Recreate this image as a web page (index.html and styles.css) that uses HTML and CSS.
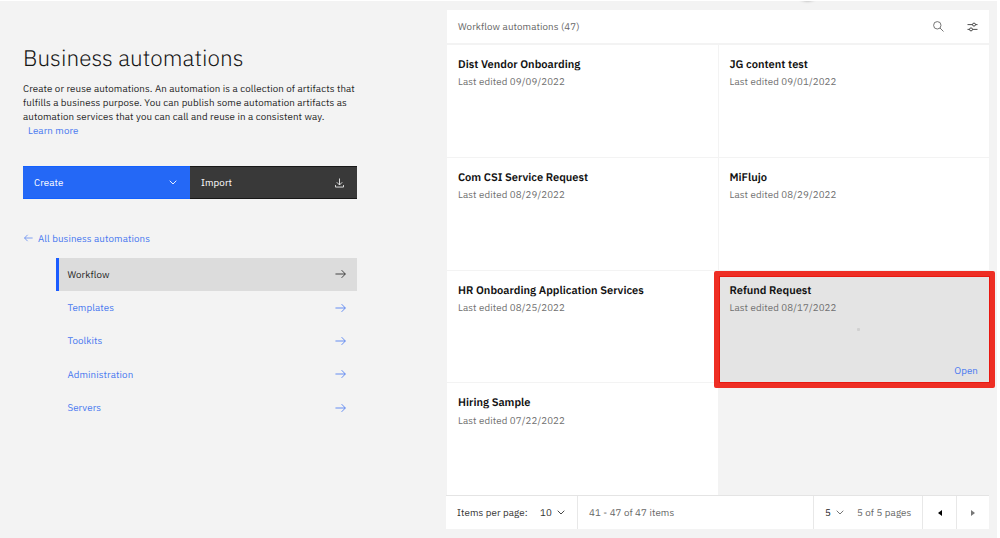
FILE: index.html
```html
<!DOCTYPE html>
<html lang="en">
<head>
<meta charset="utf-8">
<title>Business automations</title>
<link rel="stylesheet" href="styles.css">
</head>
<body>
<svg class="defs" aria-hidden="true">
  <symbol id="arrow" viewBox="0 0 12 10"><path d="M.5 5h10.8M7.2.8 11.3 5 7.2 9.2"/></symbol>
  <symbol id="chevron" viewBox="0 0 8 5"><path d="M.7.7 4 4 7.3.7"/></symbol>
</svg>
<div class="page">
  <div class="knob"></div>
  <aside class="side">
    <h1 class="title">Business automations</h1>
    <p class="desc">Create or reuse automations. An automation is a collection of artifacts that<br>fulfills a business purpose. You can publish some automation artifacts as<br>automation services that you can call and reuse in a consistent way.<br><a class="learn">Learn more</a></p>
    <div class="actions">
      <div class="btn create"><span>Create</span><svg class="chev"><use href="#chevron"/></svg></div>
      <div class="btn import"><span>Import</span><svg class="download" viewBox="0 0 10 10"><path d="M5 0v7M2 4.2l3 3 3-3M.5 7.2v2.3h9V7.2"/></svg></div>
    </div>
    <a class="back"><svg class="back-arrow"><use href="#arrow"/></svg><span>All business automations</span></a>
    <nav class="nav">
      <a class="item active"><span>Workflow</span><svg class="arrow"><use href="#arrow"/></svg></a>
      <a class="item"><span>Templates</span><svg class="arrow"><use href="#arrow"/></svg></a>
      <a class="item"><span>Toolkits</span><svg class="arrow"><use href="#arrow"/></svg></a>
      <a class="item"><span>Administration</span><svg class="arrow"><use href="#arrow"/></svg></a>
      <a class="item"><span>Servers</span><svg class="arrow"><use href="#arrow"/></svg></a>
    </nav>
  </aside>
  <main class="main">
    <header class="head">
      <span class="head-title">Workflow automations (47)</span>
      <svg class="search" viewBox="0 0 11 11"><circle cx="4.3" cy="4.3" r="3.7"/><path d="M7 7l3.5 3.5"/></svg>
      <svg class="filter" viewBox="0 0 11 10"><path d="M.5 2.6h5M8.5 2.6h2M.5 7.4h2M5.5 7.4h5"/><circle cx="7" cy="2.6" r="1.5"/><circle cx="4" cy="7.4" r="1.5"/></svg>
    </header>
    <section class="cards">
      <article class="card"><h2>Dist Vendor Onboarding</h2><p>Last edited 09/09/2022</p></article>
      <article class="card"><h2>JG content test</h2><p>Last edited 09/01/2022</p></article>
      <article class="card"><h2>Com CSI Service Request</h2><p>Last edited 08/29/2022</p></article>
      <article class="card"><h2>MiFlujo</h2><p>Last edited 08/29/2022</p></article>
      <article class="card"><h2>HR Onboarding Application Services</h2><p>Last edited 08/25/2022</p></article>
      <article class="card selected"><h2>Refund Request</h2><p>Last edited 08/17/2022</p><i class="dot"></i><a class="open">Open</a><div class="outline"></div></article>
      <article class="card"><h2>Hiring Sample</h2><p>Last edited 07/22/2022</p></article>
    </section>
    <footer class="pager">
      <div class="cell size"><span class="ipp">Items per page:</span><span class="ten">10</span><svg class="chev"><use href="#chevron"/></svg></div>
      <div class="cell range"><span>41 - 47 of 47 items</span></div>
      <div class="cell pages"><span class="five">5</span><svg class="chev"><use href="#chevron"/></svg><span class="of">5 of 5 pages</span></div>
      <div class="cell step"><svg class="caret" viewBox="0 0 4 6"><path d="M4 0v6L0 3z"/></svg></div>
      <div class="cell step next"><svg class="caret" viewBox="0 0 4 6"><path d="M0 0v6l4-3z"/></svg></div>
    </footer>
  </main>
</div>
</body>
</html>
```
FILE: styles.css
```css
* { box-sizing: border-box; }
body { margin: 0; background: #fff; font-family: "IBM Plex Sans", Roboto, "Liberation Sans", sans-serif; font-size: 9.73px; letter-spacing: .11px; color: #262626; text-rendering: geometricPrecision; }
h1, h2, p { margin: 0; }
svg { display: block; fill: none; stroke: currentColor; stroke-width: .9; flex: none; }
span, a, h1, h2, p { white-space: nowrap; }
.defs { position: absolute; width: 0; height: 0; }
.page { position: relative; display: flex; width: 997px; height: 537px; margin-top: 1px; background: #f3f3f3; overflow: hidden; }
.knob { position: absolute; left: 799px; top: -12px; width: 17px; height: 12px; border-radius: 50%; box-shadow: 0 0 3px #999; }

.side { width: 446px; padding: 43px 89px 0 23px; }
.title { height: 29px; line-height: 29px; font-size: 22.5px; font-weight: 300; letter-spacing: .05px; color: #161616; }
.desc { margin-top: 9px; line-height: 14px; }
.learn { margin-left: 5px; color: #4878f0; }
.actions { display: flex; margin-top: 28px; }
.btn { display: flex; align-items: center; justify-content: space-between; width: 167px; height: 33px; padding: 0 13px 0 11px; color: #fff; }
.create { background: #2468f6; border-top: 1px solid #1260ff; border-bottom: 1px solid #1260ff; }
.import { background: #393939; border-top: 1px solid #181818; border-bottom: 1px solid #181818; }
.chev { width: 8px; height: 5px; }
.download { width: 9px; height: 10px; }
.back { display: flex; align-items: center; gap: 5px; height: 14px; margin: 32px 0 13px 1px; color: #4878f0; }
.back-arrow { width: 9px; height: 8px; transform: scaleX(-1); }
.nav { margin-left: 33.4px; }
.item { display: flex; align-items: center; justify-content: space-between; height: 33.4px; padding: 0 11.5px 1px 8px; border-left: 3px solid transparent; color: #4878f0; }
.item.active { background: #dcdcdc; border-color: #1b5cff; color: #262626; }
.arrow { width: 11px; height: 10px; }

.main { width: 543px; padding-top: 9px; }
.head { display: flex; align-items: center; width: 542px; height: 33px; margin-left: 1px; padding: 0 11px; background: #fff; }
.head-title { flex: 1; color: #666; }
.search { width: 11px; height: 11px; color: #666; }
.filter { width: 11px; height: 10px; margin-left: 23px; color: #393939; }
.cards { display: grid; grid-template-columns: 270.5px 270.5px; grid-auto-rows: 111.75px; gap: 1px; height: 450px; margin: 2px 0 0 1px; }
.card { position: relative; padding: 13px 11px 0; background: #fff; }
.card h2 { height: 14px; line-height: 14px; font-size: 11.1px; font-weight: 600; letter-spacing: 0; color: #111; }
.card p { margin-top: 3.3px; line-height: 13px; color: #707070; }
.selected { z-index: 1; background: #e4e4e4; }
.outline { position: absolute; top: 0; left: -4.5px; width: 281px; height: 117px; border: 5px solid #ee2e24; border-radius: 2px; box-shadow: inset 0 0 0 1px #e81810; }
.dot { position: absolute; left: 138px; top: 57px; width: 3px; height: 3px; border-radius: 1px; background: #d1d1d1; }
.open { position: absolute; right: 11px; top: 93px; line-height: 14px; color: #4878f0; }
.pager { display: flex; height: 34px; border-top: 1px solid #e4e4e4; background: #fff; }
.cell { display: flex; align-items: center; color: #666; border-left: 1px solid #e8e8e8; }
.size { width: 131px; padding-left: 10px; border-left-color: transparent; color: #333; }
.ipp { width: 83px; }
.ten { width: 17px; }
.range { width: 236px; padding-left: 11px; }
.pages { width: 109px; padding-left: 11px; }
.five { width: 11px; color: #222; }
.of { margin-left: 13px; }
.step { width: 34px; justify-content: center; color: #000; }
.next { width: 33px; color: #777; }
.caret { width: 4px; height: 6px; fill: currentColor; stroke: none; }
```
